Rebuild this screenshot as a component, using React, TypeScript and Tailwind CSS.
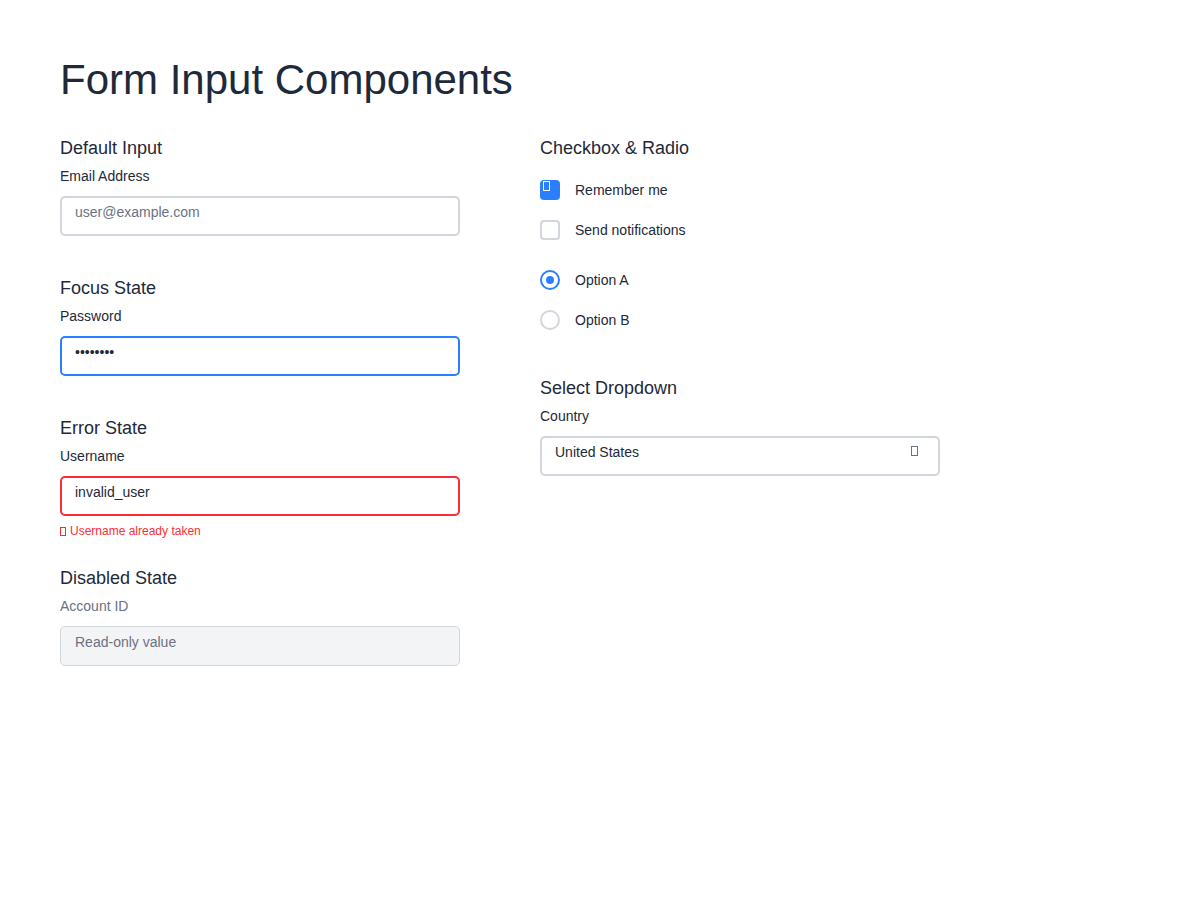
import { useState } from "react";

const font = { fontFamily: '"Liberation Sans", Arial, sans-serif' };

// small "missing glyph" box, as the reference shows for its icon characters
function Tofu({ className }: { className: string }) {
  return <span className={`inline-block border ${className}`} />;
}

function Section({
  title,
  label,
  labelClass = "text-gray-800",
  children,
}: {
  title: string;
  label: string;
  labelClass?: string;
  children: React.ReactNode;
}) {
  return (
    <div className="mb-[40px]">
      <h3 className="text-lg leading-6 text-gray-800">{title}</h3>
      <label className={`block text-sm leading-5 mt-[6px] mb-[10px] ${labelClass}`}>
        {label}
      </label>
      {children}
    </div>
  );
}

export default function App() {
  const [remember, setRemember] = useState(true);
  const [notify, setNotify] = useState(false);
  const [option, setOption] = useState("a");

  const inputBase =
    "block w-[400px] h-10 rounded-[5px] border-2 pl-[13px] pr-3 pt-[6px] pb-[14px] text-sm outline-none";

  return (
    <div className="min-h-screen bg-white px-[60px] pt-[52px]" style={font}>
      <h1 className="text-[42px] leading-[56px] text-gray-800 mb-[28px]">
        Form Input Components
      </h1>

      <div className="flex gap-20">
        {/* Column 1: text inputs */}
        <div className="w-[400px]">
          <Section title="Default Input" label="Email Address">
            <input
              type="email"
              placeholder="user@example.com"
              className={`${inputBase} border-gray-300 placeholder:text-gray-500 text-gray-800`}
            />
          </Section>

          <Section title="Focus State" label="Password">
            <input
              type="password"
              defaultValue="password"
              className={`${inputBase} border-blue-500 text-gray-800`}
            />
          </Section>

          <div className="mb-[25px]">
            <h3 className="text-lg leading-6 text-gray-800">Error State</h3>
            <label className="block text-sm leading-5 mt-[6px] mb-[10px] text-gray-800">
              Username
            </label>
            <input
              type="text"
              defaultValue="invalid_user"
              className={`${inputBase} border-red-500 text-gray-800`}
            />
            <p className="mt-[5px] flex items-center gap-[4px] text-xs leading-5 text-red-500">
              <Tofu className="w-[6px] h-[9px] border-red-500" />
              Username already taken
            </p>
          </div>

          <Section title="Disabled State" label="Account ID" labelClass="text-gray-500">
            <input
              type="text"
              disabled
              placeholder="Read-only value"
              className={`${inputBase} !border border-gray-300 bg-gray-100 pl-[14px] placeholder:text-gray-500`}
            />
          </Section>
        </div>

        {/* Column 2: checkbox, radio, select */}
        <div className="w-[400px]">
          <h3 className="text-lg leading-6 text-gray-800">Checkbox &amp; Radio</h3>

          <div className="mt-[20px] flex flex-col gap-5">
            <button
              onClick={() => setRemember(!remember)}
              className="flex items-center gap-[15px] text-sm text-gray-800"
            >
              <span
                className={`relative w-5 h-5 rounded-[4px] border-2 ${
                  remember ? "bg-blue-500 border-blue-500" : "border-gray-300"
                }`}
              >
                {remember && (
                  <Tofu className="absolute left-[1px] top-[-1px] w-[7px] h-[10px] border-white" />
                )}
              </span>
              Remember me
            </button>
            <button
              onClick={() => setNotify(!notify)}
              className="flex items-center gap-[15px] text-sm text-gray-800"
            >
              <span
                className={`w-5 h-5 rounded-[4px] border-2 ${
                  notify ? "bg-blue-500 border-blue-500" : "border-gray-300"
                }`}
              />
              Send notifications
            </button>
          </div>

          <div className="mt-[30px] flex flex-col gap-5">
            {[
              { id: "a", label: "Option A" },
              { id: "b", label: "Option B" },
            ].map((o) => (
              <button
                key={o.id}
                onClick={() => setOption(o.id)}
                className="flex items-center gap-[15px] text-sm text-gray-800"
              >
                <span
                  className={`w-5 h-5 rounded-full border-2 flex items-center justify-center ${
                    option === o.id ? "border-blue-500" : "border-gray-300"
                  }`}
                >
                  {option === o.id && <span className="w-2 h-2 rounded-full bg-blue-500" />}
                </span>
                {o.label}
              </button>
            ))}
          </div>

          <div className="mt-[46px]">
            <h3 className="text-lg leading-6 text-gray-800">Select Dropdown</h3>
            <label className="block text-sm leading-5 mt-[6px] mb-[10px] text-gray-800">
              Country
            </label>
            <div className="flex items-start justify-between w-[400px] h-10 rounded-[5px] border-2 border-gray-300 pl-[13px] pr-[20px] pt-[4px] text-sm text-gray-800">
              <span className="leading-5">United States</span>
              <Tofu className="mt-[4px] w-[7px] h-[10px] border-gray-500" />
            </div>
          </div>
        </div>
      </div>
    </div>
  );
}
